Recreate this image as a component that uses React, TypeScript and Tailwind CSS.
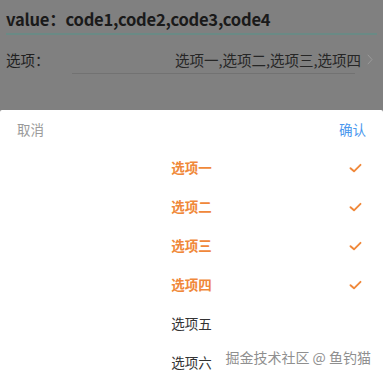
import React from "react";

const font = { fontFamily: '"Noto Sans CJK SC", "Noto Sans", sans-serif' };

function Check() {
  return (
    <svg width="13" height="10" viewBox="0 0 13 10" fill="none">
      <path d="M1.5 5.2 L5 8.3 L11.5 1.8" stroke="#f0883a" strokeWidth="1.9" strokeLinecap="round" strokeLinejoin="round" />
    </svg>
  );
}

export default function App() {
  const options = [
    { label: "选项一", on: true },
    { label: "选项二", on: true },
    { label: "选项三", on: true },
    { label: "选项四", on: true },
    { label: "选项五", on: false },
    { label: "选项六", on: false },
  ];
  return (
    <div className="relative w-[383px] h-[378px] overflow-hidden bg-[#808080]" style={font}>
      <div className="px-[6px]">
        <div className="h-[35px] pt-[5px] flex items-center border-b-2 border-[#6a8a85] text-[16.6px] tracking-[-0.25px] font-bold text-[#1a1a1a]">
          value：code1,code2,code3,code4
        </div>
        <div className="h-[38px] pt-[11px] flex items-center justify-between">
          <span className="text-[14.5px] text-[#1f1f1f]">选项：</span>
          <div className="flex items-center gap-[6px]">
            <span className="text-[14.5px] text-[#262626]">选项一,选项二,选项三,选项四</span>
            <svg width="6" height="11" viewBox="0 0 6 11" className="mr-[4px]">
              <path d="M0.8 0.8 L5 5.5 L0.8 10.2" stroke="#9a9a9a" strokeWidth="1" fill="none" />
            </svg>
          </div>
        </div>
        <div className="ml-[66px] mr-[22px] h-px bg-[#727272]" />
      </div>

      <div className="absolute inset-x-0 top-[110px] bottom-0 bg-white rounded-t-[2px]">
        <div className="h-[38px] flex items-center justify-between px-[17px] text-[13.5px]">
          <span className="text-[#9a9a9a]">取消</span>
          <span className="text-[#4a97ee]">确认</span>
        </div>
        {options.map((o) => (
          <div key={o.label} className="relative h-[39px] flex items-center justify-center">
            <span className={o.on ? "text-[13.5px] font-bold text-[#f0883a]" : "text-[13.5px] text-[#333333]"}>
              {o.label}
            </span>
            {o.on && (
              <span className="absolute right-[21px] top-1/2 -translate-y-1/2 flex">
                <Check />
              </span>
            )}
          </div>
        ))}
      </div>

      <div className="absolute right-[12px] bottom-[10px] text-[14px] text-[#8f8f8f] whitespace-pre" style={{ textShadow: "0 0 1px rgba(255,255,255,0.8)" }}>
        掘金技术社区 @ 鱼钓猫
      </div>
    </div>
  );
}
